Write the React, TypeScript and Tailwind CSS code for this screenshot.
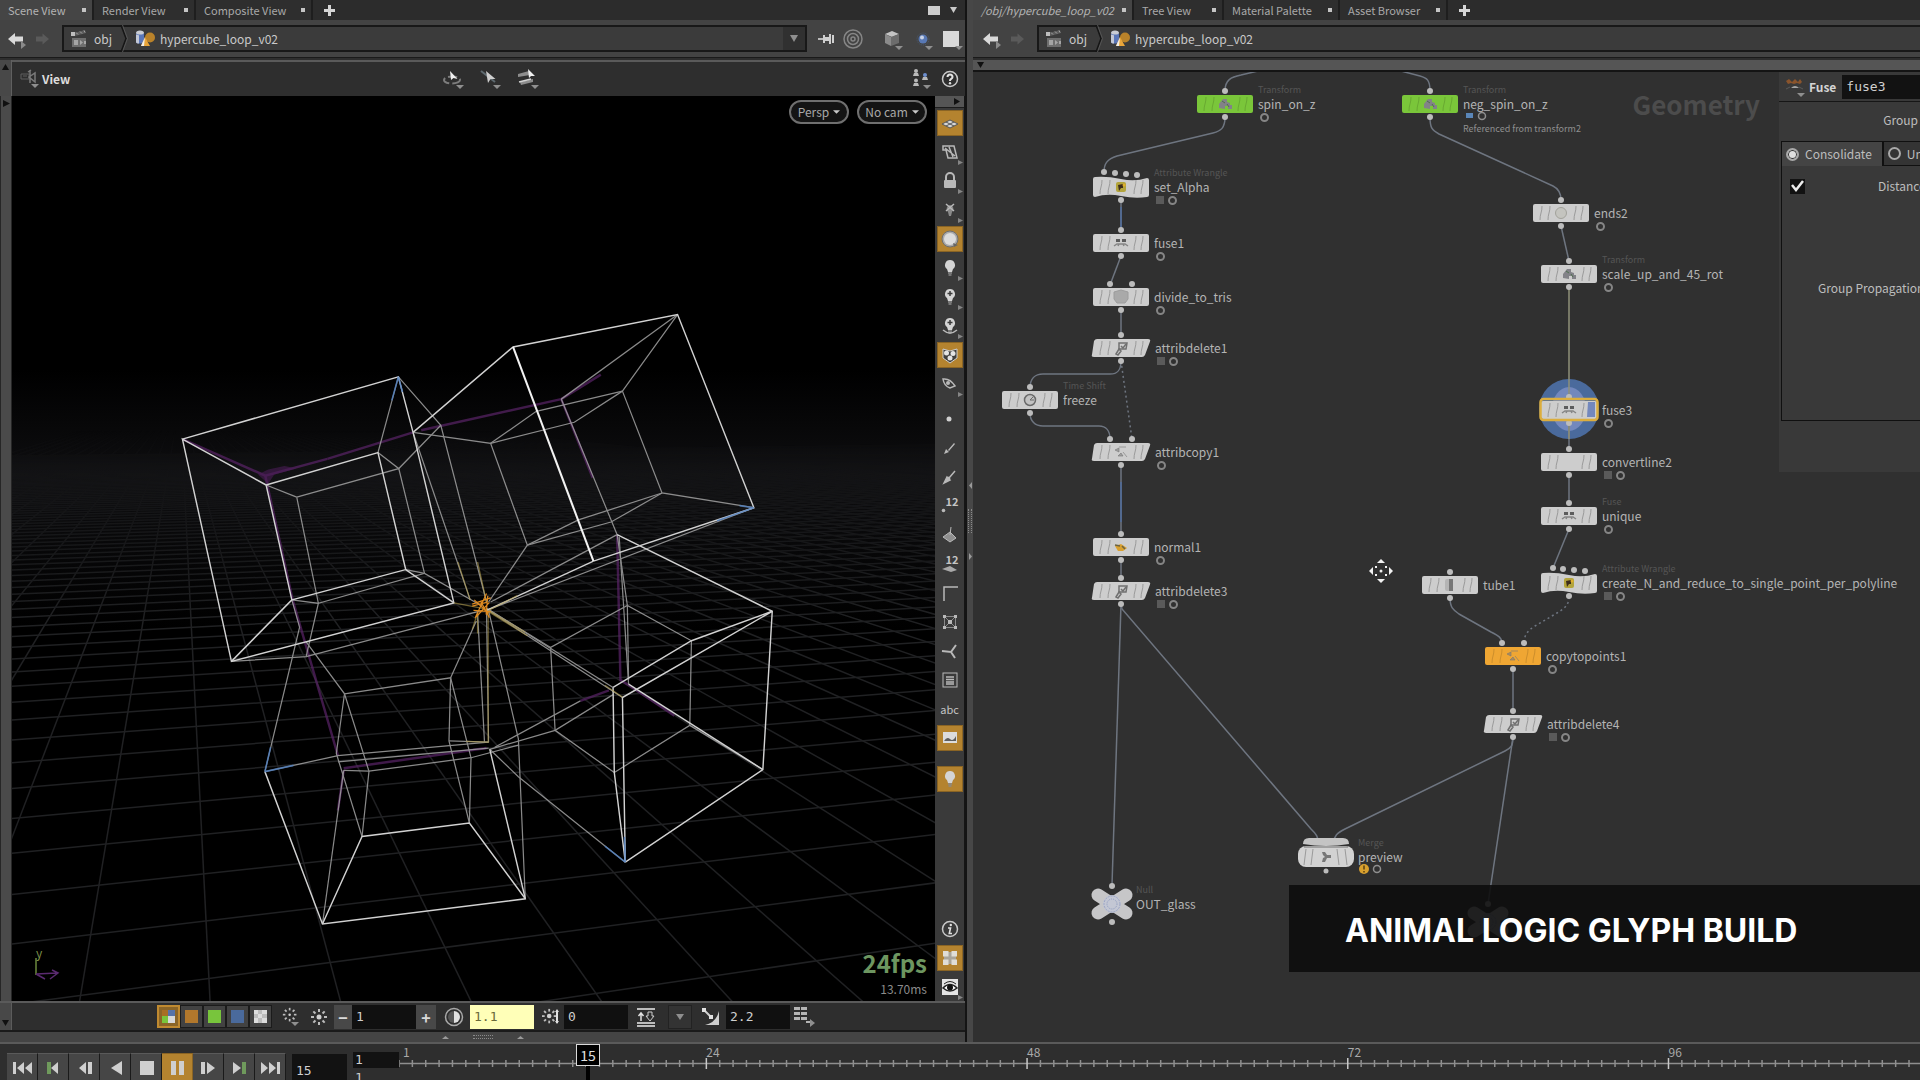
import { useState, type ReactNode } from "react";
import { clsx } from "clsx";

const uiFont = "font-['Noto_Sans_CJK_JP','Noto_Sans',sans-serif]";
const monoFont = "font-['DejaVu_Sans_Mono','Liberation_Mono',monospace]";

/* ---------- shared bits ---------- */

type Tab = { name: string; width: string; italic?: boolean };

const sceneTabs: Tab[] = [
  { name: "Scene View", width: "w-[94px]" },
  { name: "Render View", width: "w-[102px]" },
  { name: "Composite View", width: "w-[117px]" },
];

const networkTabs: Tab[] = [
  { name: "/obj/hypercube_loop_v02", width: "w-[161px]", italic: true },
  { name: "Tree View", width: "w-[90px]" },
  { name: "Material Palette", width: "w-[116px]" },
  { name: "Asset Browser", width: "w-[108px]" },
];

function TabBar({ tabs, children }: { tabs: Tab[]; children?: ReactNode }) {
  return (
    <div className="flex h-5 shrink-0 items-stretch bg-[#2c2c2c]">
      {tabs.map((tab, i) => (
        <button
          key={tab.name}
          className={clsx(
            "flex shrink-0 items-center justify-between border-r-2 border-[#1e1e1e] pr-1.5 pl-2 text-[11px] leading-5 whitespace-nowrap",
            tab.width,
            i === 0 ? "bg-[#454545] text-[#b4b4b4]" : "bg-[#2e2e2e] text-[#a9a9a9]",
            tab.italic && "italic"
          )}
        >
          {tab.name}
          <span className="size-1 bg-[#c4c4c4]" />
        </button>
      ))}
      <button aria-label="New tab" className="flex w-8 items-center justify-center">
        <svg width="11" height="11" viewBox="0 0 11 11">
          <path d="M5.500 0v11M0 5.500h11" stroke="#d6d6d6" strokeWidth="3" />
        </svg>
      </button>
      {children}
    </div>
  );
}

function PathIcons() {
  return (
    <div className="flex shrink-0 items-center">
      <button aria-label="Back" className="w-7">
        <svg width="26" height="22" viewBox="0 0 26 22">
          <path d="M2 11l7-6v3.500h8v5h-8V17z" fill="#d9d9d9" />
          <path d="M15 13l5 4-5 4z" fill="#8a8a8a" />
        </svg>
      </button>
      <button aria-label="Forward" className="w-6">
        <svg width="18" height="22" viewBox="0 0 18 22">
          <path d="M15 11L8.500 5.500v3H2v5h6.500v3z" fill="#5a5a5a" />
        </svg>
      </button>
    </div>
  );
}

function Breadcrumb() {
  return (
    <>
      <svg width="20" height="20" viewBox="0 0 20 20" className="ml-1.5 shrink-0">
        <path d="M4 4l11-3 1 3-11 3z" fill="#5c5c5c" />
        <path d="M6 3.500l2 2M10 2.500l2 2M14 1.500l1 2" stroke="#a5a5a5" />
        <rect x="1" y="3" width="4" height="4" fill="#bdbdbd" />
        <rect x="2" y="9" width="14" height="9" fill="#6f6f6f" />
        <rect x="4" y="11" width="4" height="5" fill="#a5a5a5" />
        <path d="M14 12h2v3h-2M10 11l3 2.500-3 2.500z" fill="#a5a5a5" />
      </svg>
      <a href="#obj" className="ml-1 text-xs leading-5 text-[#c9c9c9]">obj</a>
      <svg width="8" height="27" viewBox="0 0 8 27" className="ml-2 shrink-0" fill="none">
        <path d="M1 0l5 13.500L1 27" stroke="#151515" strokeWidth="1.500" />
        <path d="M2.500 0l5 13.500-5 13.500" stroke="#555" />
      </svg>
      <svg width="22" height="20" viewBox="0 0 22 20" className="ml-1.5 shrink-0">
        <ellipse cx="6" cy="4" rx="4" ry="2.500" fill="#c9ccd4" />
        <path d="M2 4v9c0 2 8 2 8 0V4c0 2-8 2-8 0" fill="#5a76b8" />
        <path d="M2 5v8c0 1 1.500 1.500 3 1.500V6.200C3 6.200 2 5.600 2 5" fill="#c3c8d6" />
        <circle cx="16" cy="8.500" r="5" fill="#b9822a" />
        <path d="M11 8l5 9H7z" fill="#e9a53a" />
        <path d="M11 8l-4 9h3z" fill="#f2efe8" />
      </svg>
      <a href="#hypercube_loop_v02" className="ml-1 text-xs leading-5 text-[#c9c9c9]">
        hypercube_loop_v02
      </a>
    </>
  );
}

const Caret = ({ x, y }: { x: number; y: number }) => (
  <path d={`M${x} ${y}h8l-4 4z`} fill="#8f8f8f" />
);

/* ---------- viewport drawing ---------- */

// Near-horizontal floor lines meet far to the right, the others at x=180 on the horizon.
const floorRows = Array.from({ length: 90 }, (_, i) => 400 + 5263 / (i + 8));
const floorCols = Array.from({ length: 60 }, (_, i) => 0.05 + 0.217 * (i - 15));

const brightEdges = [
  "55,378 584,230 620,362 720,767 175,906 55,378 260,487",
  "260,487 534,410 602,688 323,760 260,487",
  "175,906 323,760",
  "602,688 720,767",
  "620,362 865,159 1268,82 1455,541 1062,668",
  "1120,605 1500,787 1477,1163 1140,1383",
  "1500,787 1302,857 1110,968",
  "1500,787 1133,992 1140,1383",
  "1110,968 1113,1170 1140,1383",
  "257,1168 398,1530 895,1470 808,1115",
  "398,1530 495,1322 758,1290 895,1470",
  "1062,668 800,785",
  "1148,960 1477,1163",
];

const softEdges = [
  "335,516 585,448 648,697 388,768 335,516",
  "260,487 335,516",
  "534,410 585,448 688,345",
  "602,688 648,697 790,775",
  "323,760 388,768 358,895 175,906",
  "358,895 790,785",
  "584,230 534,410",
  "584,230 688,345 800,765",
  "620,362 760,760",
  "1268,82 1133,264 1230,506 1455,541",
  "1268,82 983,283",
  "620,362 810,388 900,630 1025,570 1230,506",
  "810,388 922,312 1133,264",
  "810,388 1015,338 1133,264",
  "900,630 1105,575 1230,506",
  "900,630 805,765",
  "983,283 1120,605 1145,773",
  "1455,541 800,785",
  "1120,605 810,765",
  "1302,857 1298,1058 1113,1170 968,1070 957,873 1145,773 1302,857",
  "1145,773 1148,950",
  "1125,610 1148,960",
  "1298,1058 1477,1163",
  "1140,1383 878,1180 808,1115 968,1070 1110,985",
  "820,1110 1030,1000",
  "895,1470 878,1090 805,785",
  "257,1168 436,1130 805,1098",
  "257,1168 342,825 323,760",
  "452,983 512,1167 495,1322",
  "358,860 452,983 432,1125 495,1322",
  "452,983 712,945 762,1135 758,1290",
  "712,945 708,1095 758,1290",
  "436,1145 805,1112",
  "450,1165 512,1167 762,1135 878,1105",
  "712,945 775,810",
  "708,1095 805,1098",
  "795,1098 778,790",
  "800,785 805,1098",
  "450,1165 398,1530",
  "957,873 800,780",
  "1110,968 800,780",
  "1133,992 805,785",
];

const purpleEdges = [
  "55,378 258,465 410,425",
  "410,425 620,362",
  "258,465 325,760 436,1130",
  "640,357 983,283 1060,470",
  "983,283 1080,225",
  "1120,605 1128,950 1160,970 1260,1035",
  "450,1160 800,1112",
  "450,1165 436,1260",
  "1030,1000 1100,975",
];

function Hypercube() {
  return (
    <svg x="160" y="280" width="640" height="660" viewBox="0 0 1568 1568" preserveAspectRatio="none" fill="none">
      <g stroke="#5a2468" strokeWidth="6" opacity="0.7">
        {purpleEdges.map((p) => <polyline key={p} points={p} />)}
      </g>
      <path d="M240 462l25-12 40-8 30 6-55 14-15 22z" fill="#4a1d55" opacity="0.6" />
      <g stroke="#a2a2a2" strokeWidth="3" opacity="0.85">
        {softEdges.map((p) => <polyline key={p} points={p} />)}
      </g>
      <g stroke="#d2d2d2" strokeWidth="3.500">
        {brightEdges.map((p) => <polyline key={p} points={p} />)}
      </g>
      <path d="M865 159L1062 668" stroke="#f2f2f2" strokeWidth="5" />
      <g stroke="#4f7fc0" strokeWidth="4" opacity="0.8">
        <path d="M584 230l-16 56M584 230l10 36M1455 541l-90 31M1420 536l35 5M257 1168l70-15M257 1168l14-58M1140 1383l-2-60M1140 1383l-50-38" />
      </g>
      <g stroke="#b5a04c" strokeWidth="3" opacity="0.6">
        <path d="M804 790v310M805 785l90 52M800 785l100 60M1090 963l43 28M750 1096l55 2M800 765l-22-95M760 760l-30-90M805 785l70-35M720 767l80 15M778 790v50M775 800l-10 30" />
      </g>
      <g stroke="#e08a1e" strokeWidth="3">
        <path d="M765 770l45-15M770 760l35 32M800 745l-28 58M768 785l42 3M785 762l22 40M803 750l-4 45M775 800l32-34M765 775l38-10" />
      </g>
    </svg>
  );
}

function Viewport() {
  return (
    <div className="relative min-w-0 flex-1 overflow-hidden bg-black">
      <svg className="absolute inset-0 size-full" viewBox="12 96 923 905" preserveAspectRatio="xMidYMid slice">
        <defs>
          <linearGradient id="haze" x1="0" y1="0" x2="0" y2="1">
            <stop offset="0" stopColor="#000" />
            <stop offset="0.400" stopColor="#0e0e10" />
            <stop offset="1" stopColor="#000" />
          </linearGradient>
          <linearGradient id="floorFade" gradientUnits="userSpaceOnUse" x1="0" y1="430" x2="0" y2="620">
            <stop offset="0" stopColor="#000" />
            <stop offset="0.400" stopColor="#777" />
            <stop offset="1" stopColor="#fff" />
          </linearGradient>
          <mask id="floorMask" maskUnits="userSpaceOnUse" x="0" y="400" width="960" height="620">
            <rect x="0" y="400" width="960" height="620" fill="url(#floorFade)" />
          </mask>
        </defs>
        <rect x="0" y="370" width="960" height="260" fill="url(#haze)" />
        <g mask="url(#floorMask)" stroke="#202123" strokeWidth="1.500">
          {floorRows.map((y) => (
            <line key={y} x1="-300" y1={y + (y - 400) * 0.104} x2="4600" y2="400" />
          ))}
          {floorCols.map((s) => (
            <line key={s} x1="180" y1="400" x2={180 + 700 * s} y2="1100" />
          ))}
        </g>
        <Hypercube />
        <g fill="none" strokeWidth="1.500">
          <path d="M36 975V958" stroke="#6d8a3c" />
          <path d="M36 974l21-1M50 979l8-6-6-3M36 974l9 5" stroke="#5a2a70" />
        </g>
      </svg>

      <div className="absolute top-1 right-2 flex gap-2">
        <button className="flex h-6 w-[60px] items-center justify-center gap-1 rounded-full border-2 border-[#6f6f6f] bg-[#141414] text-xs leading-5 text-[#a8a8a8]">
          Persp
          <svg width="7" height="4" viewBox="0 0 8 4"><path d="M0 0h8L4 4z" fill="#c9c9c9" /></svg>
        </button>
        <button className="flex h-6 w-[70px] items-center justify-center gap-1 rounded-full border-2 border-[#6f6f6f] bg-[#141414] text-xs leading-5 whitespace-nowrap text-[#a8a8a8]">
          No cam
          <svg width="7" height="4" viewBox="0 0 8 4"><path d="M0 0h8L4 4z" fill="#c9c9c9" /></svg>
        </button>
      </div>

      <span className="absolute bottom-10 left-6 text-xs leading-4 text-[#7d8f4a]">y</span>

      <div className="absolute right-2 bottom-0 text-right">
        <div className="text-2xl leading-7 font-bold text-[#6d9660]">24fps</div>
        <div className="text-xs leading-6 text-[#8b8b8b]">13.70ms</div>
      </div>
    </div>
  );
}

/* ---------- display options column ---------- */

const gray = "#b9b9b9";

type SideTool = { label: string; active?: boolean; icon: ReactNode };

const lightBulb = (
  <>
    <path d="M10 2a5 5 0 0 0-3 9l1 3h4l1-3a5 5 0 0 0-3-9z" fill="#d4d4d4" />
    <path d="M8 15h4M8.500 17h3" stroke="#8a8a8a" strokeWidth="1.500" />
  </>
);

const sideTools: SideTool[] = [
  {
    label: "Reference plane",
    active: true,
    icon: (
      <>
        <path d="M2 11l8-4 8 4-8 4z" fill="#d6d6d6" stroke="#555" />
        <path d="M6 9l8 4M14 9l-8 4" stroke="#555" />
      </>
    ),
  },
  {
    label: "Construction plane",
    icon: <path d="M3 4h11l3 12H8L6 8H3zM5 6l10 8M9 5l4 10" fill="none" stroke={gray} strokeWidth="1.500" />,
  },
  {
    label: "Lock camera",
    icon: (
      <>
        <path d="M6 9V6a4 4 0 0 1 8 0v3" fill="none" stroke={gray} strokeWidth="2" />
        <rect x="4" y="9" width="12" height="8" rx="1" fill={gray} />
      </>
    ),
  },
  {
    label: "No lights",
    icon: (
      <>
        <path d="M10 5a4 4 0 0 0-2 7l1 4h2l1-4a4 4 0 0 0-2-7z" fill="#8a8a8a" />
        <path d="M6 4l8 7M14 4l-8 7" stroke={gray} strokeWidth="1.500" />
      </>
    ),
  },
  {
    label: "Headlight",
    active: true,
    icon: (
      <>
        <circle cx="10" cy="10" r="8" fill="#a9a9a9" stroke="#6d6d6d" />
        <circle cx="10" cy="10" r="6" fill="#dcdcdc" />
        <path d="M13 14l5 2-4 2z" fill="#666" />
      </>
    ),
  },
  { label: "Normal lighting", icon: lightBulb },
  {
    label: "High quality lighting",
    icon: (
      <>
        {lightBulb}
        <path d="M10 4v5M7.500 6.500h5" stroke="#3a3a3a" strokeWidth="1.500" />
      </>
    ),
  },
  {
    label: "High quality lighting with shadows",
    icon: (
      <>
        {lightBulb}
        <path d="M10 4v5M7.500 6.500h5" stroke="#3a3a3a" strokeWidth="1.500" />
        <path d="M3 14q7 6 14 0" fill="none" stroke={gray} strokeWidth="1.500" />
      </>
    ),
  },
  {
    label: "Display materials",
    active: true,
    icon: (
      <>
        <path d="M3 4l7 2 7-2v9l-7 5-7-5z" fill="#3f3f3f" stroke="#cfcfcf" />
        <circle cx="6.500" cy="8" r="2.500" fill="#e4e4e4" />
        <circle cx="13" cy="8.500" r="2.500" fill="#e4e4e4" />
        <circle cx="10" cy="13" r="2.500" fill="#e4e4e4" />
      </>
    ),
  },
  {
    label: "Hide other objects",
    icon: (
      <>
        <path d="M3 5q7-1 12 7l-5 2q-6-2-7-9z" fill="none" stroke={gray} strokeWidth="1.500" />
        <circle cx="8" cy="9" r="2" fill={gray} />
      </>
    ),
  },
];

const sideMarkers: SideTool[] = [
  { label: "Points", icon: <circle cx="9" cy="10" r="2.500" fill="#d0d0d0" /> },
  { label: "Point trails", icon: <path d="M4 16l2-5 3 3zM8 12l6-7 1 1-6 7z" fill={gray} /> },
  { label: "Point normals", icon: <path d="M4 16l3-6 3 3zM9 11l6-7M8 10l2 2" fill={gray} stroke={gray} strokeWidth="1.500" /> },
  { label: "Point numbers", icon: <circle cx="3.500" cy="14.500" r="1.800" fill={gray} /> },
  { label: "Primitive normals", icon: <path d="M3 12l7-5 6 6-6 4zM10 10l1-8" fill="#8f8f8f" stroke={gray} /> },
  { label: "Primitive numbers", icon: <path d="M2 15l8-3 7 4-6 2z" fill="#a9a9a9" /> },
  { label: "Profile curves", icon: <path d="M4 18V4h14" fill="none" stroke={gray} strokeWidth="1.500" /> },
  {
    label: "Primitive hulls",
    icon: (
      <>
        <path d="M4 4l12 12M16 4L4 16M4.500 4.500h11v11h-11z" stroke="#8a8a8a" fill="none" />
        <path d="M3 3h3v3H3zM14 3h3v3h-3zM3 14h3v3H3zM14 14h3v3h-3zM8 8h4v4H8z" fill={gray} />
      </>
    ),
  },
  { label: "Breakpoints", icon: <path d="M2 10l9 1 5-7M11 11l4 6" fill="none" stroke={gray} strokeWidth="2" /> },
  {
    label: "Image plane",
    icon: (
      <>
        <rect x="3" y="3" width="14" height="14" fill="none" stroke={gray} />
        <path d="M6 7h8M6 9.500h8M6 12h8M6 14h8" stroke={gray} strokeWidth="1.500" />
      </>
    ),
  },
  { label: "abc", icon: null },
  {
    label: "Background image",
    active: true,
    icon: (
      <>
        <rect x="3" y="4" width="14" height="11" fill="#dcdcdc" />
        <path d="M4 13q3-5 6-2t6-3v5z" fill="#5d5d5d" />
      </>
    ),
  },
];

function SideButton({ tool, plain }: { tool: SideTool; plain?: boolean }) {
  const isNumber = tool.label.endsWith("numbers");
  return (
    <button aria-label={tool.label} className="flex h-[29px] w-full shrink-0 items-center justify-center">
      <span
        className={clsx(
          "relative flex size-[26px] items-center justify-center",
          tool.active && "border border-[#8a6424] bg-[#b4832f]"
        )}
      >
        {tool.label === "abc" ? (
          <span className="text-[11px] leading-4 text-[#c4c4c4]">abc</span>
        ) : (
          <svg width="20" height="20" viewBox="0 0 20 20">{tool.icon}</svg>
        )}
        {isNumber && (
          <span className="absolute top-0 right-1 text-[11px] leading-4 font-bold text-[#c4c4c4]">12</span>
        )}
        {!tool.active && !plain && (
          <svg width="5" height="5" viewBox="0 0 5 5" className="absolute right-0 bottom-0">
            <path d="M0 0l5 2.500L0 5z" fill="#858585" />
          </svg>
        )}
      </span>
    </button>
  );
}

function DisplayColumn() {
  return (
    <div className="flex w-[30px] shrink-0 flex-col border-r border-[#151515] bg-[#3a3a3a]">
      <div className="flex h-3 shrink-0 items-center justify-end border-b border-[#1c1c1c] bg-[#555] pr-1">
        <svg width="6" height="7" viewBox="0 0 6 7"><path d="M0 0l6 3.500L0 7z" fill="#111" /></svg>
      </div>
      {sideTools.map((tool) => <SideButton key={tool.label} tool={tool} />)}
      <div className="h-1.5" />
      {sideMarkers.map((tool) => <SideButton key={tool.label} tool={tool} plain />)}
      <div className="h-3" />
      <SideButton tool={{ label: "Follow selection", active: true, icon: lightBulb }} />
      <div className="flex-1" />
      <SideButton
        plain
        tool={{
          label: "Info",
          icon: (
            <>
              <circle cx="10" cy="10" r="7.500" fill="none" stroke="#c9c9c9" strokeWidth="1.500" />
              <circle cx="10.800" cy="6" r="1.200" fill="#e0e0e0" />
              <path d="M8 9h2.500l-1.200 5.500H12" fill="none" stroke="#e0e0e0" strokeWidth="1.600" />
            </>
          ),
        }}
      />
      <SideButton
        tool={{
          label: "Grid points",
          active: true,
          icon: (
            <>
              <path d="M4 4h12v12H4z" fill="#a9a49a" />
              <path d="M3 3h5.500v5.500H3zM11.500 3H17v5.500h-5.500zM3 11.500h5.500V17H3zM11.500 11.500H17V17h-5.500z" fill="#e0ddd6" />
            </>
          ),
        }}
      />
      <SideButton
        tool={{
          label: "Visualizers",
          icon: (
            <>
              <rect x="2" y="2" width="16" height="16" fill="#e4e4e4" />
              <path d="M3 11q7-7 14 0-7 6-14 0z" fill="#fff" stroke="#222" strokeWidth="1.500" />
              <circle cx="10" cy="10.500" r="3" fill="#111" />
              <path d="M4 7q6-5 12 0" fill="none" stroke="#222" />
            </>
          ),
        }}
      />
    </div>
  );
}

/* ---------- left pane ---------- */

function ViewToolbar() {
  return (
    <div className="flex h-9 shrink-0 items-center border-t-2 border-[#5a5a5a] bg-[#2e2e2e]">
      <svg width="22" height="22" viewBox="0 0 22 22" className="ml-2" fill="none">
        <path d="M1 6h8v5H1zM3 8h4" stroke="#5f5f5f" />
        <path d="M9 9l6-4v9zM10 2v13M8 4l3-2" stroke="#7b7b7b" strokeWidth="1.500" />
        <Caret x={11} y={16} />
      </svg>
      <h2 className="text-xs leading-5 font-bold text-[#dcdcdc]">View</h2>
      <div className="ml-[373px] flex gap-[15px]">
        <button aria-label="Select objects">
          <svg width="22" height="22" viewBox="0 0 22 22">
            <ellipse cx="9" cy="12" rx="8" ry="3.500" fill="none" stroke="#7d7d7d" strokeWidth="2" strokeDasharray="9 3" />
            <path d="M7 3l1 9 2.500-2 4 1z" fill="#f0f0f0" />
            <Caret x={13} y={17} />
          </svg>
        </button>
        <button aria-label="Select edges">
          <svg width="22" height="22" viewBox="0 0 22 22">
            <path d="M1 3l14 11" stroke="#5e6a70" strokeWidth="2" />
            <path d="M6 3l2 12 2.500-4 5 0z" fill="#cfcfcf" />
            <Caret x={13} y={17} />
          </svg>
        </button>
        <button aria-label="Select primitives">
          <svg width="22" height="22" viewBox="0 0 22 22">
            <path d="M1 6l11-3 1 4-12 2zM3 14l13-3v3L4 17z" fill="#8d8d8d" />
            <path d="M2 14l12-3" stroke="#d5d5d5" strokeWidth="1.500" />
            <path d="M11 1l1 9 2-2 4 0z" fill="#f0f0f0" />
            <Caret x={14} y={17} />
          </svg>
        </button>
      </div>
      <div className="ml-auto flex items-center gap-2.5 pr-1.5">
        <svg width="20" height="22" viewBox="0 0 20 22">
          <circle cx="5" cy="3" r="2" fill="#b9b9b9" />
          <path d="M2 8h6l-1-3H3zM2 18h6l-1-3H3z" fill="#b9b9b9" />
          <circle cx="5" cy="12.500" r="2" fill="#b9b9b9" />
          <circle cx="14" cy="7" r="2" fill="#6d8fcf" />
          <path d="M11 12h6l-1-3h-4z" fill="#b9b9b9" />
          <Caret x={12} y={17} />
        </svg>
        <button aria-label="Help">
          <svg width="18" height="18" viewBox="0 0 18 18" fill="none">
            <circle cx="9" cy="9" r="7.500" stroke="#c9c9c9" strokeWidth="1.500" />
            <path d="M6.500 7q0-2.500 2.500-2.500T11.500 7q0 1-1.300 1.800T9 11" stroke="#e3e3e3" strokeWidth="2" />
            <circle cx="9" cy="13.300" r="1.200" fill="#e3e3e3" />
          </svg>
        </button>
      </div>
    </div>
  );
}

function NumberField({ label, value, className }: { label: string; value: string; className?: string }) {
  const [text, setText] = useState(value);
  return (
    <input
      aria-label={label}
      value={text}
      onChange={(e) => setText(e.target.value)}
      className={clsx("h-6 w-16 shrink-0 pl-1 text-[13px] leading-5", monoFont, className ?? "bg-[#101010] text-[#cfcfcf]")}
    />
  );
}

const sunDots = Array.from({ length: 8 }, (_, i) => (i * Math.PI) / 4);

function Sun({ cx = 9, core = 2.5 }: { cx?: number; core?: number }) {
  return (
    <>
      <circle cx={cx} cy="9" r={core} fill="#cfcfcf" />
      {sunDots.map((a) => (
        <line
          key={a}
          x1={cx + 5 * Math.cos(a)}
          y1={9 + 5 * Math.sin(a)}
          x2={cx + 8 * Math.cos(a)}
          y2={9 + 8 * Math.sin(a)}
          stroke="#bdbdbd"
          strokeWidth="2"
        />
      ))}
    </>
  );
}

function DisplayBar() {
  const chip = "flex h-[23px] w-[23px] items-center justify-center border border-[#1b1b1b] bg-[#424242]";
  return (
    <div className="flex h-[31px] shrink-0 items-center border-y-2 border-t-[#5a5a5a] border-b-[#1a1a1a] bg-[#2e2e2e]">
      <div className="flex h-full w-3 items-end justify-center border-r border-[#5c5c5c] bg-[#484848] pb-1">
        <svg width="7" height="6" viewBox="0 0 7 6"><path d="M0 0h7L3.500 6z" fill="#101010" /></svg>
      </div>
      <div className="ml-[145px] flex">
        <button aria-label="All channels" className="flex h-[23px] w-[23px] items-center justify-center border-2 border-[#c08a30] bg-[#8b6527]">
          <svg width="13" height="13" viewBox="0 0 13 13">
            <path d="M0 0h6v6H0z" fill="#a86f24" /><path d="M6 0h7v6H6z" fill="#5673a8" />
            <path d="M0 6h6v7H0z" fill="#7ac53c" /><path d="M6 6h7v7H6z" fill="#d8d8d8" />
          </svg>
        </button>
        <button aria-label="Red channel" className={chip}><span className="size-[13px] bg-[#b2782c]" /></button>
        <button aria-label="Green channel" className={chip}><span className="size-[13px] bg-[#78c53c]" /></button>
        <button aria-label="Blue channel" className={chip}><span className="size-[13px] bg-[#4a6a9c]" /></button>
        <button aria-label="Alpha channel" className={chip}>
          <svg width="13" height="13" viewBox="0 0 13 13">
            <path d="M0 0h13v13H0z" fill="#dcdcdc" />
            <path d="M4 0h4v4H4zM0 4h4v4H0zM8 4h5v4H8zM4 8h4v5H4z" fill="#bcbcbc" />
          </svg>
        </button>
      </div>
      <button aria-label="Exposure presets" className="ml-2.5">
        <svg width="20" height="20" viewBox="0 0 20 20"><g transform="scale(.85)"><Sun core={1.5} /></g><Caret x={9} y={15} /></svg>
      </button>
      <svg width="18" height="18" viewBox="0 0 18 18" className="ml-2"><Sun /></svg>
      <div className="ml-1.5 flex">
        <button className="h-6 w-[18px] bg-[#484848] text-base leading-5 font-bold text-[#dadada]">−</button>
        <NumberField label="Exposure" value="1" />
        <button className="h-6 w-5 bg-[#484848] text-base leading-5 font-bold text-[#dadada]">+</button>
      </div>
      <svg width="20" height="20" viewBox="0 0 20 20" className="ml-2">
        <circle cx="10" cy="10" r="8.500" fill="none" stroke="#a9a9a9" strokeWidth="1.500" />
        <path d="M10 4a6 6 0 0 1 0 12z" fill="#e0e0e0" />
        <path d="M10 4a6 6 0 0 0 0 12z" fill="#555" />
      </svg>
      <NumberField label="Contrast" value="1.1" className="ml-1.5 bg-[#ffffb8] text-[#6a6a38]" />
      <svg width="18" height="18" viewBox="0 0 18 18" className="ml-2">
        <g transform="scale(.9)"><Sun cx={8} /></g>
        <path d="M15 3v12" stroke="#e0e0e0" strokeWidth="2" />
        <path d="M13 13h4l-2 3zM13 4h4l-2-3z" fill="#e0e0e0" />
      </svg>
      <NumberField label="Offset" value="0" className="ml-1 bg-[#101010] text-[#cfcfcf]" />
      <svg width="20" height="20" viewBox="0 0 20 20" className="ml-2" fill="none">
        <path d="M1 2h18M1 16h18M1 19h18" stroke="#bdbdbd" strokeWidth="2" />
        <path d="M5 14V6M2.500 9L5 6l2.500 3" stroke="#e0e0e0" strokeWidth="1.500" />
        <path d="M12 5h4v4h2l-4 5-4-5h2z" stroke="#cfcfcf" />
      </svg>
      <button aria-label="Color profile" className="ml-3 flex h-6 w-6 items-center justify-center border border-[#222] bg-[#333]">
        <svg width="8" height="6" viewBox="0 0 8 6"><path d="M0 0h8L4 6z" fill="#8f8f8f" /></svg>
      </button>
      <svg width="18" height="18" viewBox="0 0 18 18" className="ml-2.5">
        <path d="M17 3v14H3q11-2 14-14z" fill="#cfcfcf" />
        <path d="M2 2l7 7" stroke="#cfcfcf" strokeWidth="2" />
        <path d="M0 0h4v4H0zM7 7h4v4H7z" fill="#e0e0e0" />
      </svg>
      <NumberField label="Gamma" value="2.2" className="ml-1.5 bg-[#101010] text-[#cfcfcf]" />
      <svg width="22" height="20" viewBox="0 0 22 20" className="ml-1">
        <path d="M0 0h6v3H0zM7 0h6v3H7zM0 5h6v3H0zM7 5h6v3H7zM0 10h6v3H0zM7 10h6v3H7z" fill="#b5b5b5" />
        <path d="M12 15h4" stroke="#b5b5b5" strokeWidth="2" />
        <path d="M16 12l5 4-5 4z" fill="#8f8f8f" />
      </svg>
    </div>
  );
}

function ScenePane() {
  return (
    <section className="flex min-w-0 flex-col border-r-2 border-[#141414]">
      <TabBar tabs={sceneTabs}>
        <div className="ml-auto flex items-center gap-2.5 pr-2">
          <span className="h-[9px] w-3 bg-[#cccccc]" />
          <svg width="7" height="6" viewBox="0 0 7 6"><path d="M0 0h7L3.500 6z" fill="#c9c9c9" /></svg>
        </div>
      </TabBar>
      <div className="flex h-[38px] shrink-0 items-center border-b border-[#1a1a1a] bg-[#434343] pl-1.5">
        <PathIcons />
        <div className="ml-1 flex h-[27px] min-w-0 flex-1 items-center border-2 border-[#181818] bg-[#3b3b3b]">
          <Breadcrumb />
          <button aria-label="Path history" className="ml-auto flex h-full w-[22px] items-center justify-center bg-[#303030]">
            <svg width="8" height="7" viewBox="0 0 8 7"><path d="M0 0h8L4 7z" fill="#8f8f8f" /></svg>
          </button>
        </div>
        <div className="ml-2.5 flex items-center gap-1.5">
          <svg width="20" height="20" viewBox="0 0 20 20">
            <path d="M1 10h6" stroke="#b9b9b9" strokeWidth="2" />
            <path d="M6 6h2v2h4V5h2v10h-2v-3H8v2H6zM15 6h2v8h-2z" fill="#cfcfcf" />
          </svg>
          <svg width="20" height="20" viewBox="0 0 20 20" fill="none" stroke="#868686" strokeWidth="1.500">
            <circle cx="10" cy="10" r="9" /><circle cx="10" cy="10" r="5.500" /><circle cx="10" cy="10" r="2" />
          </svg>
        </div>
        <div className="ml-5 flex items-center gap-2.5 pr-0.5">
          <svg width="20" height="22" viewBox="0 0 20 22">
            <path d="M2 6l7-3 7 3-7 3z" fill="#c4c4c4" /><path d="M2 6l6 3v9l-6-3z" fill="#8b8b8b" />
            <path d="M16 6L8 9v9l8-3z" fill="#6c6c6c" /><Caret x={12} y={18} />
          </svg>
          <svg width="20" height="22" viewBox="0 0 20 22">
            <circle cx="10" cy="11" r="6" fill="none" stroke="#4a5a74" strokeDasharray="1 1" />
            <circle cx="10" cy="11" r="4.500" fill="#5878b4" /><circle cx="9" cy="9.500" r="2" fill="#c8d2e6" /><Caret x={12} y={18} />
          </svg>
          <svg width="20" height="22" viewBox="0 0 20 22">
            <rect x="0" y="3" width="16" height="16" fill="#d9d9d9" /><Caret x={12} y={18} />
          </svg>
        </div>
      </div>
      <div className="mt-0.5 flex shrink-0">
        <div className="flex w-3 justify-center border-r border-[#606060] bg-[#484848] pt-1">
          <svg width="7" height="6" viewBox="0 0 7 6"><path d="M0 6h7L3.500 0z" fill="#101010" /></svg>
        </div>
        <div className="min-w-0 flex-1"><ViewToolbar /></div>
      </div>
      <div className="flex min-h-0 flex-1">
        <div className="w-3 shrink-0 border-x border-[#262626] bg-[#4a4a4a] pt-1 pl-0.5">
          <svg width="7" height="7" viewBox="0 0 7 7"><path d="M0 0l7 3.500L0 7z" fill="#101010" /></svg>
        </div>
        <Viewport />
        <DisplayColumn />
      </div>
      <DisplayBar />
      <div className="flex h-2.5 shrink-0 items-center justify-center gap-6 bg-[#444]">
        <svg width="7" height="3" viewBox="0 0 7 3"><path d="M0 3h7L3.500 0z" fill="#9a9a9a" /></svg>
        <span className="h-1 w-5 border-y border-dotted border-[#8a8a8a]" />
        <svg width="7" height="3" viewBox="0 0 7 3"><path d="M0 3h7L3.500 0z" fill="#9a9a9a" /></svg>
      </div>
    </section>
  );
}

/* ---------- network editor ---------- */

type Glyph = "transform" | "wrangle" | "fuse" | "shade" | "delete" | "clock" | "copy" | "normal" | "ends" | "tube" | "none";

type NetNode = {
  name: string;
  type?: string;
  x: number;
  y: number;
  shape?: "box" | "skew" | "wave";
  color?: string;
  glyph: Glyph;
  inputs?: number[];
  lock?: boolean;
  ring?: boolean;
};

// Positions are node centres in network space.
const nodes: NetNode[] = [
  { name: "spin_on_z", type: "Transform", x: 252, y: 32, color: "#7ac63a", glyph: "transform", ring: true },
  { name: "neg_spin_on_z", type: "Transform", x: 457, y: 32, color: "#7ac63a", glyph: "transform" },
  { name: "set_Alpha", type: "Attribute Wrangle", x: 148, y: 115, shape: "wave", glyph: "wrangle", inputs: [-17, -6, 5, 16], lock: true, ring: true },
  { name: "fuse1", x: 148, y: 171, glyph: "fuse", ring: true },
  { name: "divide_to_tris", x: 148, y: 225, glyph: "shade", inputs: [-11, 11], ring: true },
  { name: "attribdelete1", x: 148, y: 276, shape: "skew", glyph: "delete", lock: true, ring: true },
  { name: "freeze", type: "Time Shift", x: 57, y: 328, glyph: "clock" },
  { name: "attribcopy1", x: 148, y: 380, shape: "skew", glyph: "copy", inputs: [-11, 11], ring: true },
  { name: "normal1", x: 148, y: 475, glyph: "normal", ring: true },
  { name: "attribdelete3", x: 148, y: 519, shape: "skew", glyph: "delete", lock: true, ring: true },
  { name: "ends2", x: 588, y: 141, glyph: "ends", ring: true },
  { name: "scale_up_and_45_rot", type: "Transform", x: 596, y: 202, glyph: "transform", ring: true },
  { name: "fuse3", x: 596, y: 338, glyph: "fuse", ring: true },
  { name: "convertline2", x: 596, y: 390, glyph: "none", lock: true, ring: true },
  { name: "unique", type: "Fuse", x: 596, y: 444, glyph: "fuse", ring: true },
  { name: "create_N_and_reduce_to_single_point_per_polyline", type: "Attribute Wrangle", x: 596, y: 511, shape: "wave", glyph: "wrangle", inputs: [-16, -6, 5, 16], lock: true, ring: true },
  { name: "tube1", x: 477, y: 513, glyph: "tube" },
  { name: "copytopoints1", x: 540, y: 584, color: "#efa633", glyph: "copy", inputs: [-11, 11], ring: true },
  { name: "attribdelete4", x: 540, y: 652, shape: "skew", glyph: "delete", lock: true, ring: true },
];

const wires = [
  "M252 19C252 8 258 5 268 3L285 -1",
  "M457 19C457 8 454 6 447 4L428 -1",
  "M252 45C252 56 248 59 240 61L144 84C134 87 131 92 131 100",
  "M148 128V158",
  "M148 184L137 213",
  "M148 238V264",
  "M148 289C148 298 145 302 137 302H70C62 302 57 307 57 316",
  "M57 341C57 349 62 354 70 354H126C133 354 137 359 137 367",
  "M148 392V462",
  "M148 488V506",
  "M148 532L139 813",
  "M148 532L149 537L338 757C344 763 345 765 345 770",
  "M457 45C457 56 459 58 466 62L580 114C586 117 588 121 588 128",
  "M588 154L596 189",
  "M596 350V377",
  "M596 402V431",
  "M596 457L580 496",
  "M477 526C477 535 480 538 486 542L518 560C526 564 529 566 529 571",
  "M540 597V639",
  "M540 665C540 674 538 676 532 679L372 757C364 761 361 764 361 770",
  "M540 665L515 832",
];

function NodeGlyph({ kind }: { kind: Glyph }) {
  switch (kind) {
    case "transform":
      return (
        <>
          <path d="M-6 4v-4l4-5h4v3l3 1v2h2v4h-4v-3h-3v3z" fill="#828288" />
          <path d="M-3 -3l3 2M2 0l2 3" stroke="#4f6f4f" />
        </>
      );
    case "wrangle":
      return (
        <>
          <rect x="-5" y="-5" width="10" height="10" rx="2" fill="#b3a43c" />
          <path d="M-3 -2l5-1v4h-2l-2 3z" fill="#3c2c1c" />
          <circle cx="3" cy="-2" r="1.500" fill="#e0b030" />
        </>
      );
    case "fuse":
      return (
        <>
          <path d="M-5 -4h4v3h-4zM1 -4h4v3H1z" fill="#5c5c5c" />
          <path d="M-7 3l3-2h8l3 2M-3 3l1-2M3 3l-1-2" fill="none" stroke="#858585" strokeWidth="1.500" />
        </>
      );
    case "shade":
      return <path d="M0 -7l7 2v7l-3 4h-8l-3-4v-7z" fill="#a9a9a9" stroke="#9c9c9c" />;
    case "delete":
      return (
        <>
          <path d="M-2 -5h8l-1 6h-7z" fill="none" stroke="#707070" strokeWidth="1.500" />
          <path d="M0 -2l2 2 3-4M-5 6l3-5 2 2-3 4z" fill="none" stroke="#707070" strokeWidth="1.500" />
        </>
      );
    case "clock":
      return (
        <>
          <circle r="5.500" fill="#c2c2c2" stroke="#6a6a6a" strokeWidth="1.500" />
          <path d="M0 0h4M0 0l3-3" stroke="#6a6a6a" />
        </>
      );
    case "copy":
      return <path d="M-6 -2l4-2v4zM-2 -5h7M2 0l4 5M-3 4l3-3 2 3z" fill="#77777788" stroke="#77777799" />;
    case "normal":
      return (
        <>
          <path d="M-6 -1l6-2 6 4-4 3-5 0z" fill="#d9a02e" />
          <path d="M-6 -2l5 1M1 -1l3 3" fill="none" stroke="#6b6242" strokeWidth="1.500" />
        </>
      );
    case "ends":
      return <circle r="5.500" fill="#c4c4bf" stroke="#a2a29b" />;
    case "tube":
      return (
        <>
          <rect x="-5" y="-6" width="8" height="12" rx="2" fill="#b4b4b4" />
          <path d="M-1 -6h4v12h-4z" fill="#777" />
        </>
      );
    default:
      return null;
  }
}

function NodeBody({ node }: { node: NetNode }) {
  const fill = node.color ?? "#cdcdcd";
  const stripe = node.color ? "#00000026" : "#9a9a9a";
  const wave = node.shape === "wave";
  const half = wave ? 11 : 9;
  const inputs = node.inputs ?? [0];
  return (
    <g transform={`translate(${node.x} ${node.y})`}>
      {node.shape === "skew" ? (
        <path d="M-24 -9H27q3 0 2 2.500L24 7q-1 2-3 2H-27q-3 0-2-2.500L-27 -7q1-2 3-2z" fill={fill} />
      ) : wave ? (
        <path d="M-28 -8q0-2 2-2Q-14 -11 0 -8T26 -9q2 0 2 2V8q0 2-2 2Q14 12 0 9T-26 10q-2 0-2-2z" fill={fill} />
      ) : (
        <rect x="-28" y="-9" width="56" height="18" rx="2" fill={fill} />
      )}
      {[-20, -12, 14, 21].map((sx) => (
        <path key={sx} d={`M${sx + 1} -7q0 4-1 7t-1 7`} fill="none" stroke={stripe} />
      ))}
      <NodeGlyph kind={node.glyph} />
      {inputs.map((dx, i) => (
        <circle key={dx} cx={dx} cy={wave ? -15 + i : -half - 4} r="3" fill="#bcbcbc" />
      ))}
      <circle cx="0" cy={half + (wave ? 2 : 4)} r="3" fill="#bcbcbc" />
    </g>
  );
}

function NullNode({ x, y }: { x: number; y: number }) {
  return (
    <g transform={`translate(${x} ${y})`}>
      <path d="M-14 -9L14 9M14 -9L-14 9" stroke="#c6c6c8" strokeWidth="13" strokeLinecap="round" />
      <circle r="9" fill="#c3c7d4" />
      <circle r="5" fill="none" stroke="#8f9cc0" strokeDasharray="1 1" />
      <circle r="8" fill="none" stroke="#9aa4c4" strokeDasharray="2 1" />
      <circle cy="-18" r="3" fill="#bcbcbc" />
      <circle cy="18" r="3" fill="#bcbcbc" />
    </g>
  );
}

function NodeLabel({ node }: { node: NetNode }) {
  const offset = node.shape === "skew" ? 34 : 33;
  return (
    <div
      className="absolute flex flex-col whitespace-nowrap"
      style={{ left: node.x + offset, top: node.y - 20 }}
    >
      <span className="h-3 text-[9px] leading-3 text-[#555]">{node.type}</span>
      <span className="text-xs leading-4 text-[#b4b4b4]">{node.name}</span>
      <span className="flex h-2.5 items-center gap-1 pl-0.5">
        {node.lock && <span className="size-2 bg-[#5a5a5a]" />}
        {node.ring && <span className="size-[9px] rounded-full border-2 border-[#858585]" />}
      </span>
    </div>
  );
}

function ParameterPanel() {
  const [mode, setMode] = useState("Consolidate");
  const [snap, setSnap] = useState(true);
  return (
    <aside className="absolute top-0 right-0 flex h-[400px] w-[141px] flex-col overflow-hidden bg-[#393939] text-xs whitespace-nowrap text-[#bdbdbd]">
      <div className="flex h-[30px] shrink-0 items-center border-b border-[#161616]">
        <svg width="20" height="22" viewBox="0 0 20 22" className="ml-1.5 shrink-0">
          <path d="M1 5l3-2 3 3 3-3 3 3 2-3 2 3-2 2-3-1-3 1-3-1-3 1z" fill="#8a542c" />
          <path d="M6 12q4-4 8 0z" fill="#a5a5a5" />
          <path d="M1 13l4-2M18 13l-4-2" stroke="#5a5a5a" />
          <Caret x={12} y={17} />
        </svg>
        <span className="ml-1 leading-5 font-bold text-[#d4d4d4]">Fuse</span>
        <input
          aria-label="Node name"
          defaultValue="fuse3"
          className={clsx("ml-1.5 h-6 w-[79px] shrink-0 bg-[#121212] pl-1 text-[13px] text-[#cfcfcf]", monoFont)}
        />
      </div>
      <div className="flex h-9 shrink-0 items-center justify-end pr-0.5 leading-5">Group</div>
      <div className="mt-[3px] ml-0.5 h-[280px] shrink-0 border-y border-l border-[#101010]">
        <div className="flex h-6 items-stretch">
          {["Consolidate", "Unique"].map((name) => (
            <label
              key={name}
              className={clsx(
                "flex shrink-0 items-center gap-1.5 pr-2.5 pl-1 leading-5",
                mode === name ? "bg-[#444]" : "border-b border-l-2 border-[#101010] bg-[#343434]"
              )}
            >
              <input
                type="radio"
                name="fuse-mode"
                checked={mode === name}
                onChange={() => setMode(name)}
                className="size-[13px] shrink-0 appearance-none rounded-full border-2 border-[#a9a9a9] bg-[#333] checked:bg-[#e0e0e0] checked:shadow-[inset_0_0_0_1px_#333]"
              />
              {name}
            </label>
          ))}
        </div>
        <div className="flex h-10 items-center pl-2">
          <label className="relative flex size-4 items-center justify-center">
            <input
              type="checkbox"
              aria-label="Use distance"
              checked={snap}
              onChange={() => setSnap(!snap)}
              className="size-[15px] appearance-none bg-[#121212]"
            />
            {snap && (
              <svg width="13" height="12" viewBox="0 0 13 12" className="pointer-events-none absolute" fill="none">
                <path d="M1 5l4 5 7-9" stroke="#ededed" strokeWidth="2.500" />
              </svg>
            )}
          </label>
          <span className="ml-[73px] leading-5">Distance</span>
        </div>
        <div className="mt-[72px] pl-9 leading-5">Group Propagation</div>
      </div>
    </aside>
  );
}

function NetworkCanvas() {
  return (
    <div className="relative min-h-0 flex-1 overflow-hidden bg-[#303030]">
      <div className="absolute top-3 right-40 text-[26px] leading-10 font-bold text-[#4c4c4c]">Geometry</div>

      <svg className="absolute inset-0 size-full">
        <circle cx="596" cy="337" r="30" fill="#4a6a9c" />
        <ellipse cx="596" cy="337" rx="17" ry="22" fill="#7388bd" />
        <g fill="none" stroke="#6e7580" strokeWidth="1.500">
          {wires.map((d) => <path key={d} d={d} />)}
          <path d="M148 289L159 367" strokeDasharray="2 3" />
          <path d="M596 525C596 533 591 537 584 541L562 554C554 559 551 564 551 571" strokeDasharray="2 3" />
        </g>
        <path d="M148 135V155M148 410V450" stroke="#4f6c9a" strokeWidth="1.500" />
        <path d="M596 215V325M596 350V367" stroke="#8e9078" strokeWidth="1.500" />
        {nodes.map((node) => <NodeBody key={node.name} node={node} />)}
        <rect x="567.500" y="327" width="57" height="21" rx="3" fill="none" stroke="#dcae3e" strokeWidth="2.500" />
        <path d="M615 330h7v15h-8z" fill="#7388bd" />

        <g transform="translate(353 785)">
          <path d="M-23 -13q0-6 6-6h34q6 0 6 6-23 4-46 0z" fill="#c4c4c4" />
          <rect x="-28" y="-11" width="56" height="21" rx="8" fill="#d2d2d2" />
          <path d="M-22 -10h44" stroke="#6f6f6f" />
          <path d="M-20 -8l-2 16M-13 -8l-2 16M11 -8l2 16M19 -8l2 16" stroke="#9a9a9a" />
          <path d="M-4 -5h3l2 3h4v3h-4l-2 4h-3l1-4 2-1-2-2z" fill="#777" />
          <circle cy="14" r="2.500" fill="#bcbcbc" />
        </g>
        <circle cx="391" cy="797" r="5" fill="#d9a02e" />
        <path d="M391 793.500v4M391 799v1.500" stroke="#5a3f10" strokeWidth="1.500" />
        <circle cx="404" cy="797" r="3.500" fill="none" stroke="#8f8f8f" strokeWidth="1.500" />
        <NullNode x={139} y={832} />
        <NullNode x={515} y={850} />

        <path d="M493 41h7v5h-7z" fill="#5a86b8" />
        <circle cx="509" cy="44" r="3.500" fill="none" stroke="#8f8f8f" strokeWidth="1.500" />

        <g transform="translate(408 499)" fill="#f2f2f2">
          <path d="M-4 -8h8L0 -12zM-4 8h8L0 12zM-8 -4v8L-12 0zM8 -4v8L12 0z" />
          <circle r="1.500" />
          <path d="M-6 -5h2v2h-2zM4 -5h2v2H4zM-6 3h2v2h-2zM4 3h2v2H4z" />
        </g>
      </svg>

      {nodes.map((node) => <NodeLabel key={node.name} node={node} />)}
      <NodeLabel node={{ name: "preview", type: "Merge", x: 352, y: 785, glyph: "none" }} />
      <NodeLabel node={{ name: "OUT_glass", type: "Null", x: 130, y: 832, glyph: "none" }} />
      <span className="absolute top-[51px] left-[490px] text-[9px] leading-3 whitespace-nowrap text-[#8f8f8f]">
        Referenced from transform2
      </span>

      <ParameterPanel />

      <div className="absolute right-0 bottom-[70px] left-[316px] flex h-[87px] items-center bg-[#0d0d0d]/90 pt-1 pl-14">
        <h1 className="font-['Inter','Open_Sans',sans-serif] text-[32px] leading-10 font-bold whitespace-nowrap text-white">
          ANIMAL LOGIC GLYPH BUILD
        </h1>
      </div>
    </div>
  );
}

function NetworkPane() {
  return (
    <section className="flex min-w-0 flex-col">
      <TabBar tabs={networkTabs} />
      <div className="flex h-[38px] shrink-0 items-center border-b border-[#1a1a1a] bg-[#434343] pl-2">
        <PathIcons />
        <div className="ml-1 flex h-[27px] min-w-0 flex-1 items-center border-y-2 border-l-2 border-[#181818] bg-[#3b3b3b]">
          <Breadcrumb />
        </div>
      </div>
      <div className="mt-0.5 flex h-3 shrink-0 items-center border-b-2 border-[#141414] bg-[#555] pl-1">
        <svg width="7" height="6" viewBox="0 0 7 6"><path d="M0 0h7L3.500 6z" fill="#101010" /></svg>
      </div>
      <NetworkCanvas />
    </section>
  );
}

/* ---------- playbar ---------- */

const transport = [
  { label: "First frame", d: "M2 4h3v12H2zM13 4v12L6 10zM21 4v12l-7-6z" },
  { label: "Previous key", d: "M16 4v12L9 10z", key: "M5 4h4v12H5z" },
  { label: "Previous frame", d: "M13 4v12L6 10zM15 4h4v12h-4z" },
  { label: "Play backwards", d: "M18 3v14L7 10z" },
  { label: "Stop", d: "M5 3h14v14H5z" },
  { label: "Pause", d: "M5 3h5v14H5zM13 3h5v14h-5z", active: true },
  { label: "Next frame", d: "M4 4h4v12H4zM10 4v12l8-6z" },
  { label: "Next key", d: "M5 4v12l8-6z", key: "M14 4h4v12h-4z" },
  { label: "Last frame", d: "M2 4v12l7-6zM10 4v12l7-6zM18 4h3v12h-3z" },
];

const FRAME_WIDTH = 13.363;
const frameNumbers = Array.from({ length: 200 }, (_, i) => i + 1);

function Playbar() {
  return (
    <footer className="flex h-[38px] shrink-0 overflow-hidden border-t-2 border-[#5a5a5a] bg-[#2e2e2e]">
      <div className="mt-[9px] ml-[7px] flex h-[31px] shrink-0">
        {transport.map((b) => (
          <button
            key={b.label}
            aria-label={b.label}
            className={clsx(
              "flex w-[31px] justify-center border-t border-r pt-1",
              b.active ? "border-[#8a6424] bg-[#b4832f]" : "border-t-[#5a5a5a] border-r-[#1a1a1a] bg-[#464646]"
            )}
          >
            <svg width="23" height="20" viewBox="0 0 23 20">
              <path d={b.d} fill="#cfcfcf" />
              {b.key && <path d={b.key} fill="#6f9a5c" />}
            </svg>
          </button>
        ))}
      </div>
      <input
        aria-label="Current frame"
        defaultValue="15"
        className={clsx("mt-2.5 ml-1.5 h-8 w-[55px] shrink-0 bg-[#121212] pl-1 text-[13px] leading-5 text-[#cfcfcf]", monoFont)}
      />
      <div className="ml-1.5 flex w-[46px] shrink-0 flex-col pt-2">
        <input aria-label="Range start" defaultValue="1" className={clsx("h-4 w-full bg-[#121212] pl-0.5 text-[13px] text-[#cfcfcf]", monoFont)} />
        <input aria-label="Global start" defaultValue="1" className={clsx("mt-0.5 h-4 w-full bg-[#2e2e2e] pl-0.5 text-[13px] text-[#cfcfcf]", monoFont)} />
      </div>
      <div className="relative min-w-0 flex-1 overflow-hidden">
        <svg className="absolute inset-0 size-full">
          <path d="M1 19.500H4000" stroke="#8f8f8f" strokeWidth="1.500" />
          {frameNumbers.map((f) => {
            const major = f % 24 === 0;
            const x = (f - 1) * FRAME_WIDTH;
            return (
              <line key={f} x1={x} x2={x} y1={major ? 14 : 16} y2={major ? 25 : 23} stroke={major ? "#c9c9c9" : "#8f8f8f"} strokeWidth="1.500" />
            );
          })}
        </svg>
        {[1, 24, 48, 72, 96].map((f) => (
          <span
            key={f}
            className="absolute top-0 text-xs leading-4 text-[#a9a9a9]"
            style={{ left: (f - 1) * FRAME_WIDTH + (f === 1 ? 4 : 0) }}
          >
            {f}
          </span>
        ))}
        <div className="absolute top-0 flex h-9 w-6 flex-col items-center" style={{ left: 14 * FRAME_WIDTH - 10 }}>
          <span className="w-full border border-[#d9d9d9] bg-black text-center text-sm leading-5 text-[#e0e0e0]">15</span>
          <span className="w-1 flex-1 bg-black" />
        </div>
      </div>
    </footer>
  );
}

export default function App() {
  return (
    <div className={clsx("flex h-screen flex-col overflow-hidden bg-[#2e2e2e]", uiFont)}>
      <main className="grid min-h-0 flex-1 grid-cols-[967fr_6px_947fr]">
        <ScenePane />
        <div className="flex flex-col items-center justify-center gap-5 bg-[#474747]">
          <svg width="3" height="7" viewBox="0 0 3 7"><path d="M3 0v7L0 3.500z" fill="#9a9a9a" /></svg>
          <span className="h-6 w-1 border-x border-dotted border-[#8a8a8a]" />
          <svg width="3" height="7" viewBox="0 0 3 7"><path d="M0 0v7l3-3.500z" fill="#9a9a9a" /></svg>
        </div>
        <NetworkPane />
      </main>
      <Playbar />
    </div>
  );
}
